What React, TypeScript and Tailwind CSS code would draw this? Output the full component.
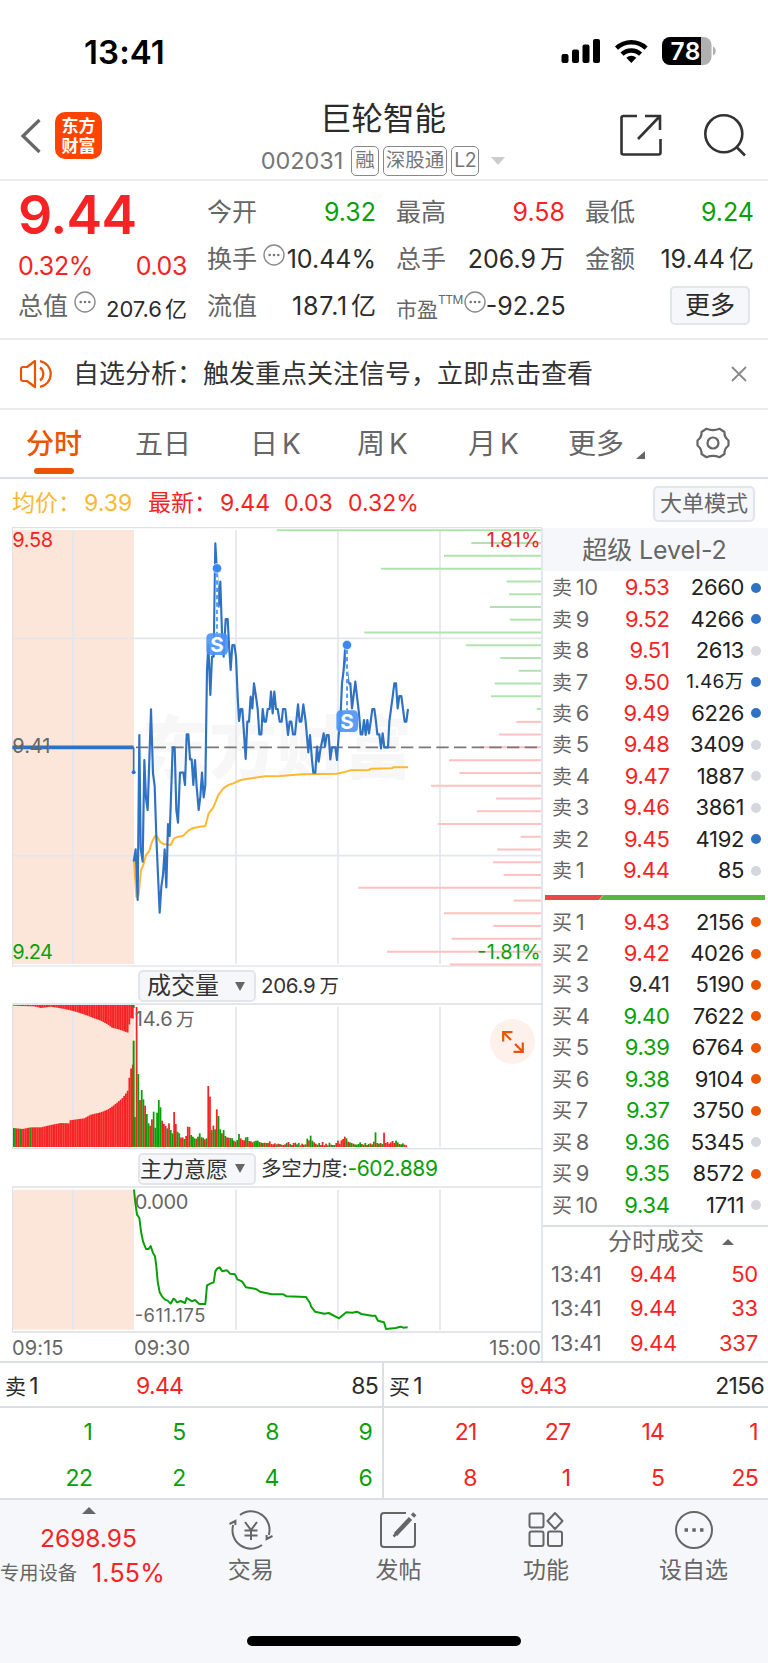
import type { ReactNode } from "react";
import clsx from "clsx";

type Level = { label: string; price: string; volume: string; dot: string };

const RED = "text-[#f52323]";
const GREEN = "text-[#08a008]";
const BLACK = "text-[#2b2b2b]";

const BLUE_DOT = "bg-[#2f72c4]";
const GRAY_DOT = "bg-[#d5d7de]";
const ORANGE_DOT = "bg-[#ea5504]";

const sells: Level[] = [
  { label: "10", price: "9.53", volume: "2660", dot: BLUE_DOT },
  { label: "9", price: "9.52", volume: "4266", dot: BLUE_DOT },
  { label: "8", price: "9.51", volume: "2613", dot: GRAY_DOT },
  { label: "7", price: "9.50", volume: "1.46万", dot: BLUE_DOT },
  { label: "6", price: "9.49", volume: "6226", dot: BLUE_DOT },
  { label: "5", price: "9.48", volume: "3409", dot: GRAY_DOT },
  { label: "4", price: "9.47", volume: "1887", dot: GRAY_DOT },
  { label: "3", price: "9.46", volume: "3861", dot: GRAY_DOT },
  { label: "2", price: "9.45", volume: "4192", dot: BLUE_DOT },
  { label: "1", price: "9.44", volume: "85", dot: GRAY_DOT },
];

const buys: Level[] = [
  { label: "1", price: "9.43", volume: "2156", dot: ORANGE_DOT },
  { label: "2", price: "9.42", volume: "4026", dot: ORANGE_DOT },
  { label: "3", price: "9.41", volume: "5190", dot: ORANGE_DOT },
  { label: "4", price: "9.40", volume: "7622", dot: ORANGE_DOT },
  { label: "5", price: "9.39", volume: "6764", dot: ORANGE_DOT },
  { label: "6", price: "9.38", volume: "9104", dot: ORANGE_DOT },
  { label: "7", price: "9.37", volume: "3750", dot: ORANGE_DOT },
  { label: "8", price: "9.36", volume: "5345", dot: GRAY_DOT },
  { label: "9", price: "9.35", volume: "8572", dot: ORANGE_DOT },
  { label: "10", price: "9.34", volume: "1711", dot: GRAY_DOT },
];

const trades = [
  { time: "13:41", price: "9.44", volume: "50" },
  { time: "13:41", price: "9.44", volume: "33" },
  { time: "13:41", price: "9.44", volume: "337" },
];

// All charts use three units per pixel
const PRICE_LINE =
  "401,1025 407,988 413,1140 418,645 422,985 428,1025 433,720 438,835 443,870 453,568 459,760 464,798 469,950 474,1065 479,1178 484,1100 489,1065 494,988 499,1102 504,912 509,948 518,682 524,682 529,870 534,908 540,758 550,758 555,795 560,643 565,643 570,718 575,718 580,795 585,720 590,800 596,870 601,830 606,758 611,832 616,795 621,450 625,375 631,525 636,410 641,410 646,70 651,160 656,260 661,185 666,340 671,410 677,297 683,297 687,375 692,450 697,375 703,375 708,410 713,530 717,603 722,567 727,567 732,640 737,717 742,605 747,605 752,530 757,565 762,490 768,530 773,567 778,643 784,643 788,567 793,605 798,605 803,567 809,567 813,515 818,580 823,515 828,567 833,567 839,605 845,605 849,567 856,567 864,645 869,605 874,605 879,643 885,643 894,553 899,605 904,605 910,553 917,605 925,697 930,645 936,720 940,758 946,758 951,680 956,725 961,690 971,640 975,680 980,645 986,645 991,718 996,682 1006,682 1011,720 1016,645 1021,603 1026,490 1031,450 1036,375 1041,450 1046,490 1051,490 1056,565 1066,485 1071,530 1077,580 1082,643 1087,643 1092,600 1097,645 1102,600 1107,640 1112,605 1117,567 1123,567 1128,605 1132,643 1138,643 1143,685 1148,640 1153,682 1164,682 1168,605 1178,530 1183,490 1188,490 1193,565 1198,528 1204,528 1209,567 1214,605 1219,605 1224,567";

const AVERAGE_LINE =
  "402,1025 409,1130 416,1125 423,1050 430,1035 438,1005 447,995 455,968 465,948 472,950 480,965 490,972 512,975 522,955 535,950 550,947 565,932 580,924 600,920 616,918 626,880 640,862 655,825 670,805 685,795 700,790 722,780 740,777 765,773 795,769 840,768 870,766 905,763 960,762 1010,761 1030,757 1050,751 1108,750 1112,746 1175,745 1180,742 1224,742";

const FORCE_LINE =
  "402,120 406,160 411,195 418,205 423,245 429,275 438,298 446,298 452,289 459,310 465,320 469,350 473,395 479,428 486,440 495,450 503,453 512,462 520,447 524,449 531,458 542,454 555,460 560,445 568,450 576,455 585,451 598,463 616,463 621,407 631,402 641,398 646,365 652,356 659,353 667,365 681,362 690,372 705,374 712,389 726,395 738,413 768,418 780,426 815,434 850,434 860,440 918,442 930,460 933,470 945,486 973,492 986,490 1017,506 1039,488 1057,489 1071,486 1084,493 1115,498 1126,498 1134,513 1152,518 1158,538 1187,535 1202,531 1210,534 1223,533";

// Left edge of each price level, from 9.58 down to 9.24
const LEVEL_STARTS = [
  830, 1414, 1332, 1143, 1520, 1527, 1470, 1530, 1093, 1398, 1501, 1556, 1484,
  1473, 1610, 1549, 1497, 1440, 1347, 1378, 1293, 1488, 1431, 1313, 1562, 1492,
  1479, 1511, 1075, 1541, 1332, 1480, 1355, 1161, 1350,
];

const VOLUMES =
  "g90 r420 g219 r141 g171 g143 r124 g99 g71 r64 r83 g106 g58 g103 g141 g119 r79 r69 r63 g56 r71 g51 g41 r105 r69 g46 g41 r28 r29 g24 r33 r61 r60 g36 g31 g26 r25 g31 g41 r29 g28 r23 g26 r183 r151 g51 r64 g53 r113 g93 g53 r41 g51 g33 r29 r28 g27 g26 r19 r16 g21 g39 r26 r21 r20 g29 g30 r18 r17 r14 g17 g19 g19 g15 r13 g12 r13 g12 r12 r17 r9 r8 r11 g8 r10 g9 r7 r6 r8 g12 r15 g9 r6 r12 r13 g8 g12 r5 r10 g7 r8 g25 r20 g34 g19 r14 r10 g7 g12 r6 r15 r5 r10 g5 g13 r7 g6 g6 r12 r19 r10 r20 r24 r31 g26 r16 g14 g12 r10 g8 g7 g9 g14 r9 g7 g12 r6 g9 r11 g8 r16 g44 r12 g10 r12 g9 r43 r12 r15 r10 r14 r18 r12 g19 g14 r9 g8 g11 r7 r5";

const PRE_BOTTOM: [number, number][] = [
  [37, 505], [65, 508], [90, 503], [120, 503], [150, 496], [180, 490], [204, 491],
  [206, 482], [250, 476], [270, 465], [300, 458], [320, 450], [335, 440],
  [350, 428], [365, 415], [380, 395], [384, 362], [390, 328], [398, 310],
];

const PRE_TOP: [number, number][] = [
  [37, 138], [60, 139], [100, 140], [120, 145], [150, 141], [180, 146], [205, 151],
  [220, 155], [240, 161], [260, 168], [280, 176], [300, 183], [320, 194],
  [335, 205], [350, 208], [365, 213], [381, 219], [385, 196], [391, 174], [398, 178],
];

function sample(table: [number, number][], x: number) {
  const i = table.findIndex(([px]) => px > x);
  if (i < 1) return table[i === 0 ? 0 : table.length - 1][1];
  const [x0, y0] = table[i - 1];
  const [x1, y1] = table[i];
  return y0 + ((y1 - y0) * (x - x0)) / (x1 - x0);
}

const preBars = Array.from({ length: 70 }, (_, i) => {
  const x = 37 + i * 5.2;
  return { x, top: sample(PRE_TOP, x), bottom: sample(PRE_BOTTOM, x) };
});

const volumeBars = VOLUMES.split(" ").map((v, i) => ({
  x: 402 + i * 5.12,
  height: Number(v.slice(1)),
  up: v[0] === "r",
}));

const stats: { label: ReactNode; value: string; unit?: string; color: string }[][] = [
  [
    { label: "今开", value: "9.32", color: GREEN },
    { label: "最高", value: "9.58", color: RED },
    { label: "最低", value: "9.24", color: GREEN },
  ],
  [
    { label: <>换手<Dots /></>, value: "10.44%", color: BLACK },
    { label: "总手", value: "206.9", unit: "万", color: BLACK },
    { label: "金额", value: "19.44", unit: "亿", color: BLACK },
  ],
];

function Dots() {
  return (
    <svg className="mb-3 ml-1.5 inline-block h-[22px] w-[22px] align-middle" viewBox="0 0 22 22">
      <circle cx="11" cy="11" r="10" fill="none" stroke="#8a8a8a" strokeWidth="1.4" />
      <g fill="#777">
        <circle cx="6.7" cy="11" r="1.3" />
        <circle cx="11" cy="11" r="1.3" />
        <circle cx="15.3" cy="11" r="1.3" />
      </g>
    </svg>
  );
}

function StatusBar() {
  return (
    <div className="flex h-[86px] items-start justify-between pl-[84px] pr-[52px] text-black">
      <span className="mt-[32px] text-[33px] font-semibold leading-[40px] tracking-[0.1px]">
        13:41
      </span>
      <svg className="mt-[34px]" width="157" height="34" viewBox="559 34 157 34">
        <rect x="561.5" y="54" width="7" height="9" rx="2" />
        <rect x="572" y="49.5" width="7" height="13.5" rx="2" />
        <rect x="582.5" y="44.5" width="7" height="18.5" rx="2" />
        <rect x="593" y="39" width="7" height="24" rx="2" />
        <g fill="none" stroke="#000" strokeWidth="4.4">
          <path d="M616.5 48.2a21.5 21.5 0 0 1 29.6 0" />
          <path d="M622 54.2a13.4 13.4 0 0 1 18.6 0" />
        </g>
        <path d="M631.3 63l-5-5.2a7.4 7.4 0 0 1 10 0z" />
        <path d="M701 37h2.5a8 8 0 0 1 8 8v12a8 8 0 0 1-8 8H701z" fill="#b0b0b0" />
        <path d="M701 37h-31a8 8 0 0 0-8 8v12a8 8 0 0 0 8 8h31z" />
        <path d="M713 46.5c3.6 1.5 3.6 7.5 0 9z" fill="#b0b0b0" />
        <text x="670.5" y="59.5" fill="#fff" fontSize="24.5" fontWeight="600" textLength="30">
          78
        </text>
      </svg>
    </div>
  );
}

function Header() {
  return (
    <header className="flex h-[95px] items-start justify-between border-b-2 border-[#ebebeb] pl-5 pr-[22px]">
      <div className="flex w-[200px] pt-[26px]">
        <svg className="mt-[6px]" width="22" height="36" viewBox="0 0 22 36">
          <path d="M19.5 2L3 18l16.5 16" fill="none" stroke="#666" strokeWidth="3.2" />
        </svg>
        <div className="ml-[13px] flex h-[47px] w-[47px] flex-col items-center justify-center rounded-[10px] bg-[#ff4400] text-[17px] font-bold leading-[20px] text-white">
          <span>东方</span>
          <span>财富</span>
        </div>
      </div>
      <div className="flex flex-col items-center">
        <h1 className="mt-[13px] text-[31.5px] leading-[40px] text-[#2b2b2b]">巨轮智能</h1>
        <div className="mt-[5px] flex items-center text-[#777]">
          <span className="text-[23.5px] leading-[34px] tracking-[-0.1px]">002031</span>
          <span className="ml-2 h-[30px] rounded-[5px] border-[1.5px] border-[#888] px-[3px] text-[19.5px] leading-[27px]">
            融
          </span>
          <span className="ml-1 h-[30px] rounded-[5px] border-[1.5px] border-[#888] px-[2px] text-[19.5px] leading-[27px]">
            深股通
          </span>
          <span className="ml-1 h-[30px] rounded-[5px] border-[1.5px] border-[#888] px-[2px] text-[19.5px] leading-[27px] tracking-tight">
            L2
          </span>
          <svg className="ml-3" width="14" height="8" viewBox="0 0 14 8">
            <path d="M0 0h14L7 8z" fill="#ccc" />
          </svg>
        </div>
      </div>
      <div className="flex w-[200px] justify-end gap-[41px] pt-[27px]">
        <svg width="43" height="44" viewBox="0 0 43 44" fill="none" stroke="#333" strokeWidth="2.6">
          <path d="M18 3H4.5q-2 0-2 2v34.5q0 2 2 2h35q2 0 2-2V26" />
          <path d="M26 3h15v14M41 3L19 26" />
        </svg>
        <svg width="43" height="44" viewBox="0 0 43 44" fill="none" stroke="#333" strokeWidth="2.6">
          <circle cx="20.8" cy="20.8" r="18.5" />
          <path d="M33 33.5l9 9" />
        </svg>
      </div>
    </header>
  );
}

function Quote() {
  return (
    <section className="flex h-[159px] gap-5 border-b-2 border-[#ebebeb] pl-[18px] pr-[14px]">
      <div className="w-[169px]">
        <div className={clsx("mt-[6px] h-[55px] text-[53.5px] font-semibold leading-[55px] tracking-[-0.6px]", RED)}>9.44</div>
        <div className={clsx("mt-[6px] flex justify-between text-[25px] leading-[36px] tracking-[-0.4px]", RED)}>
          <span>0.32%</span>
          <span>0.03</span>
        </div>
        <div className="mt-[1px] flex h-11 items-center justify-between text-[25px] text-[#666]">
          <span className="whitespace-nowrap">总值<Dots /></span>
          <span className="pt-1 text-[22px] text-[#2b2b2b]">
            207.6<span className="ml-[3px]">亿</span>
          </span>
        </div>
      </div>
      <div className="flex-1 pt-2">
        {stats.map((row, i) => (
          <div key={i} className="flex h-[47px] gap-5 leading-[47px]">
            {row.map((cell, j) => (
              <div key={j} className="flex w-[169px] justify-between whitespace-nowrap text-[25px] text-[#666]">
                <span>{cell.label}</span>
                <span className={cell.color}>
                  {cell.value}
                  {cell.unit && <span className="ml-1">{cell.unit}</span>}
                </span>
              </div>
            ))}
          </div>
        ))}
        <div className="flex h-[47px] gap-5 whitespace-nowrap text-[25px] leading-[47px] text-[#666]">
          <div className="flex w-[169px] justify-between">
            <span>流值</span>
            <span className="tracking-[0.8px] text-[#2b2b2b]">
              187.1<span className="ml-[3px] tracking-normal">亿</span>
            </span>
          </div>
          <div className="flex w-[169px] justify-between">
            <span className="flex text-[21px]">
              <span className="pt-[3px]">市盈</span>
              <span className="-mt-[7px] text-[12px] tracking-[-0.5px]">TTM</span>
              <span className="-ml-[5px]"><Dots /></span>
            </span>
            <span className="text-[#2b2b2b]">-92.25</span>
          </div>
          <div className="flex w-[169px] justify-end pr-1">
            <button className="mt-[3px] h-[39px] w-[80px] rounded-[5px] border-2 border-[#e3e5ec] bg-[#f6f7fa] text-[25px] leading-[35px] text-[#2b2b2b]">
              更多
            </button>
          </div>
        </div>
      </div>
    </section>
  );
}

function Notice() {
  return (
    <div className="flex h-[70px] items-center border-b-2 border-[#ebebeb] pl-5 pr-[21px]">
      <svg width="33" height="30" viewBox="0 0 33 30" fill="none" stroke="#ea5504" strokeWidth="2.2">
        <path d="M15 2L7 8H3q-2 0-2 2v10q0 2 2 2h4l8 6z" strokeLinejoin="round" />
        <path d="M20 8.5a8 8 0 0 1 0 13M20 2.2a13 13 0 0 1 0 25.6" />
      </svg>
      <span className="-mt-0.5 ml-[20px] flex-1 text-[26px] text-[#333]">
        自选分析：触发重点关注信号，立即点击查看
      </span>
      <svg width="16" height="16" viewBox="0 0 16 16" stroke="#888" strokeWidth="1.8">
        <path d="M1 1l14 14M15 1L1 15" />
      </svg>
    </div>
  );
}

function Tabs() {
  return (
    <nav className="flex h-[69px] items-start border-b-2 border-[#dcdee6] pl-[25px] pt-[10px] text-[28px] leading-[48px] text-[#666]">
      <div className="flex w-[58px] flex-col items-center font-medium text-[#ea5504]">
        <span>分时</span>
        <i className="h-[6px] w-10 rounded-[3px] bg-[#ea5504]" />
      </div>
      <span className="ml-[52px] w-[58px]">五日</span>
      <span className="ml-[57px] flex w-[50px] gap-[4px]">日<span>K</span></span>
      <span className="ml-[57px] flex w-[50px] gap-[4px]">周<span>K</span></span>
      <span className="ml-[61px] flex w-[50px] gap-[4px]">月<span>K</span></span>
      <span className="ml-[50px]">更多</span>
      <svg className="ml-[12px] mt-[31px]" width="9" height="8" viewBox="0 0 9 8">
        <path d="M9 0v8H0z" fill="#666" />
      </svg>
      <svg className="ml-[51px] mt-[7px]" width="34" height="32" viewBox="0 0 34 32" fill="none" stroke="#666" strokeWidth="2.2">
        <path d="M10.5 1.8Q17 4.500 23.5 1.8L28.5 5Q28 10 32.5 13.5V18.5Q28 22 28.5 27L23.5 30.2Q17 27.5 10.5 30.2L5.5 27Q6 22 1.5 18.5V13.5Q6 10 5.5 5Z" strokeLinejoin="round" />
        <circle cx="17" cy="16" r="5.5" />
      </svg>
    </nav>
  );
}

function PriceSummary() {
  return (
    <div className={clsx("flex h-[49px] items-center whitespace-nowrap pl-[12px] pr-[13px] text-[23px]", RED)}>
      <span className="w-[72px] text-[#fdb833]">均价：</span>
      <span className="w-[64px] text-[#fdb833]">9.39</span>
      <span className="w-[72px]">最新：</span>
      <span className="w-[64px]">9.44</span>
      <span className="w-[64px]">0.03</span>
      <span>0.32%</span>
      <button className="ml-auto h-[36px] w-[102px] rounded-[5px] border-2 border-[#e3e5ec] bg-[#f6f7fa] text-[22px] leading-[31px] text-[#666]">
        大单模式
      </button>
    </div>
  );
}

function SellMarker({ x, top, box }: { x: number; top: number; box: number }) {
  return (
    <g>
      <path d={`M${x} ${top}V${box}`} stroke="#fff" strokeWidth="7" />
      <path d={`M${x} ${top + 14}V${box}`} stroke="#5b9dfb" strokeWidth="6" strokeDasharray="13 9" />
      <circle cx={x} cy={top} r="14" fill="#3c87f2" stroke="#fff" strokeWidth="2" />
      <rect x={x - 32} y={box} width="65" height="65" rx="13" fill="#4a92f8" fillOpacity="0.9" />
      <text x={x} y={box + 55} textAnchor="middle" fontSize="62" fontWeight="700" fill="#fff">
        S
      </text>
    </g>
  );
}

function PriceChart() {
  return (
    <svg className="block" width="530" height="440" viewBox="36 21 1590 1320">
      <rect x="39" y="30" width="363" height="1302" fill="#fce6da" />
      <text x="424" y="760" fontSize="204" fontWeight="900" fill="#f7f7f8" textLength="812">
        东方财富
      </text>
      <g stroke="#e4e6ee" strokeWidth="5">
        <path d="M37 355H1626M37 1007H1626M219 30V1332M708 30V1332M1014 30V1332M1320 30V1332" />
      </g>
      <path d="M37 1338V23H1626" fill="none" stroke="#dfe1e8" strokeWidth="4" />
      <path d="M37 1338H1626" stroke="#e4e6ee" strokeWidth="4" />
      {LEVEL_STARTS.map((x, i) => (
        <path
          key={i}
          d={`M${x} ${31 + i * 38.3}H1625`}
          stroke={i < 15 ? "#b0e4ae" : "#ffc0c0"}
          strokeWidth="6"
        />
      ))}
      <path d="M408 682H1626" stroke="#777" strokeWidth="5" strokeDasharray="37 16" />
      <polyline points={AVERAGE_LINE} fill="none" stroke="#fdb833" strokeWidth="6" strokeLinejoin="round" />
      <polyline points={PRICE_LINE} fill="none" stroke="#2f72c4" strokeWidth="6.5" strokeLinejoin="round" />
      <path d="M37 682H401" stroke="#2f72c4" strokeWidth="11" />
      <path d="M401 682V757" stroke="#2f72c4" strokeWidth="5" />
      <circle cx="401" cy="757" r="6" fill="#2f72c4" />
      <SellMarker x={651} top={145} box={340} />
      <SellMarker x={1041} top={375} box={571} />
      <g fontSize="60">
        <text x="37" y="81" fill="#f52323" textLength="122">9.58</text>
        <text x="37" y="699" fill="#666" textLength="114">9.41</text>
        <text x="37" y="1317" fill="#08a008" textLength="122">9.24</text>
        <text x="1460" y="81" fill="#f52323" textLength="162">1.81%</text>
        <text x="1432" y="1317" fill="#08a008" textLength="190">-1.81%</text>
      </g>
    </svg>
  );
}

function VolumeChart() {
  return (
    <div className="relative">
      <svg className="block" width="530" height="147" viewBox="36 130 1590 441">
        <rect x="39" y="136" width="363" height="426" fill="#fce6da" />
        <path d="M219 141V562M708 141V562M1014 141V562M1320 141V562" stroke="#e4e6ee" strokeWidth="5" />
        {preBars.map((b, i) => (
          <g key={i} fill={[0, 1, 4, 10].includes(i) ? "#08a008" : "#f52323"}>
            <rect x={b.x} y="136" width="5.4" height={b.top - 136} />
            <rect x={b.x} y={b.bottom} width="5.4" height={562 - b.bottom} />
          </g>
        ))}
        <rect x="398" y="243" width="6" height="319" fill="#08a008" />
        <rect x="398" y="136" width="6" height="9" fill="#08a008" />
        {volumeBars.map((b, i) => (
          <rect
            key={i}
            x={b.x}
            y={562 - b.height}
            width="5.3"
            height={b.height}
            fill={b.up ? "#f52323" : "#08a008"}
          />
        ))}
        <path d="M37 133H1626" stroke="#dcdee6" strokeWidth="5" />
        <path d="M37 133V567H1626" fill="none" stroke="#dcdee6" strokeWidth="4" />
        <g fill="#666" fontSize="60">
          <text x="404" y="199" textLength="114">14.6</text>
          <text x="528" y="199" fontSize="56">万</text>
        </g>
      </svg>
      <button className="absolute right-[6px] top-[16px] flex h-[45px] w-[45px] items-center justify-center rounded-full bg-[#fef1eb]">
        <svg width="24" height="24" viewBox="0 0 24 24" fill="none" stroke="#ea5504" strokeWidth="2.2">
          <path d="M2.2 11.5V2.2H11.5M2.2 2.2L10 10M21.8 12.5v9.3H12.5M21.8 21.8L14 14" />
        </svg>
      </button>
    </div>
  );
}

function ForceChart() {
  return (
    <svg className="block" width="530" height="147" viewBox="36 109 1590 441">
      <rect x="39" y="120" width="363" height="420" fill="#fce6da" />
      <path d="M219 120V540M708 120V540M1014 120V540M1320 120V540" stroke="#e4e6ee" strokeWidth="5" />
      <path d="M37 547V112H1626" fill="none" stroke="#dfe1e8" strokeWidth="4" />
      <path d="M37 547H1626" stroke="#dcdee6" strokeWidth="5" />
      <g fill="#666" fontSize="60">
        <text x="404" y="178" textLength="161">0.000</text>
        <text x="404" y="516" fontSize="55" textLength="212">-611.175</text>
      </g>
      <polyline points={FORCE_LINE} fill="none" stroke="#08a008" strokeWidth="6" strokeLinejoin="round" />
    </svg>
  );
}

function IndicatorBar({ name, children }: { name: string; children: ReactNode }) {
  return (
    <div className="flex items-center whitespace-nowrap pl-[126px]">
      <button
        className={clsx(
          "flex h-8 w-[118px] items-center justify-between rounded-[5px] border-2 border-[#e3e5ec] bg-[#f6f7fa] pr-[9px] leading-[28px] text-[#333]",
          name.length > 3 ? "text-[22px]" : "pl-[7px] text-[24px]",
        )}
      >
        {name}
        <svg width="10" height="9" viewBox="0 0 10 9">
          <path d="M0 0h10L5 9z" fill="#666" />
        </svg>
      </button>
      <span className="ml-[5px] text-[20.5px] tracking-[-0.3px] text-[#333]">{children}</span>
    </div>
  );
}

function LevelRow({ side, level }: { side: string; level: Level }) {
  const diff = Number(level.price) - 9.41;
  const color = diff > 0.001 ? RED : diff < -0.001 ? GREEN : BLACK;
  return (
    <div className="flex h-[31.45px] items-center whitespace-nowrap pl-[9px] pr-[7px] text-[22px] tracking-[-0.35px]">
      <span className="w-[58px] text-[#666]">
        <span className="mr-[4px] text-[20px]">{side}</span>
        {level.label}
      </span>
      <span className={clsx("w-[59.5px] text-right", color)}>{level.price}</span>
      <span className={clsx("flex-1 text-right text-[#222]", level.volume.includes("万") && "text-[19px] tracking-[0.3px]")}>
        {level.volume}
      </span>
      <i className={clsx("ml-[7px] h-[10px] w-[10px] rounded-full", level.dot)} />
    </div>
  );
}

function OrderBook() {
  return (
    <aside className="flex w-[227px] flex-col border-l-2 border-[#e4e6ee]">
      <h2 className="h-[43px] shrink-0 bg-[#f6f7fa] pr-[2px] text-center text-[25px] leading-[44px] tracking-[-0.1px] text-[#666]">
        超级 Level-2
      </h2>
      <div className="pt-[1px]">
        {sells.map((level) => (
          <LevelRow key={level.label} side="卖" level={level} />
        ))}
      </div>
      <svg className="ml-[2px] mt-[9px] shrink-0" width="220" height="5" viewBox="0 0 220 5">
        <path d="M0 0h58l-4 5H0z" fill="#e8484a" />
        <path d="M58.5 0H220v5H54.5z" fill="#56b83e" />
      </svg>
      <div className="pt-[6px]">
        {buys.map((level) => (
          <LevelRow key={level.label} side="买" level={level} />
        ))}
      </div>
      <div className="mt-[4px] border-t-2 border-[#dcdee6]">
        <div className="flex h-[30px] items-center justify-center gap-[18px] pl-[31px] text-[24px] text-[#666]">
          分时成交
          <svg width="12" height="6" viewBox="0 0 12 6">
            <path d="M0 6h12L6 0z" fill="#666" />
          </svg>
        </div>
        {trades.map((t) => (
          <div key={t.volume} className="flex h-[34.8px] items-center pl-[8px] pr-[10px] text-[22px] tracking-[-0.2px]">
            <span className="w-[55px] text-[#666]">{t.time}</span>
            <span className={clsx("w-[71px] text-right", RED)}>{t.price}</span>
            <span className={clsx("flex-1 text-right", RED)}>{t.volume}</span>
          </div>
        ))}
      </div>
    </aside>
  );
}

function QueueHalf({ side, price, volume, rows, color }: { side: string; price: string; volume: string; rows: string[][]; color: string }) {
  return (
    <div className="flex-1 text-[23px] tracking-[-0.7px]">
      <div className="flex h-[45px] items-center border-b-2 border-[#dcdee6] pl-[5px] pr-[4px] pt-1 text-[#2b2b2b]">
        <span className="w-[131px]"><span className="mr-1 text-[21px]">{side}</span>1</span>
        <span className={RED}>{price}</span>
        <span className="ml-auto">{volume}</span>
      </div>
      {rows.map((row, i) => (
        <div key={i} className={clsx("grid h-[46px] grid-cols-4 items-center pr-[9px] pt-[2px]", color)}>
          {row.map((n, j) => (
            <span key={j} className="pr-px text-right">{n}</span>
          ))}
        </div>
      ))}
    </div>
  );
}

function OrderQueue() {
  return (
    <section className="flex h-[139px] border-y-2 border-[#dcdee6]">
      <div className="flex w-[384px] border-r-2 border-[#dcdee6]">
        <QueueHalf side="卖" price="9.44" volume="85" color={GREEN} rows={[["1", "5", "8", "9"], ["22", "2", "4", "6"]]} />
      </div>
      <QueueHalf side="买" price="9.43" volume="2156" color={RED} rows={[["21", "27", "14", "1"], ["8", "1", "5", "25"]]} />
    </section>
  );
}

const actions: { label: string; icon: ReactNode }[] = [
  {
    label: "交易",
    icon: (
      <>
        <path d="M11 5A18.5 18.5 0 0 1 39.8 25M33 35A18.5 18.5 0 0 1 4.2 15M.5 14l5.9-3v4M43.5 26l-5.9 3v-4" />
        <path d="M16 12l6 8 6-8M15.5 20.5h13M15.5 25.5h13M22 19.5V30" />
      </>
    ),
  },
  {
    label: "发帖",
    icon: (
      <>
        <path d="M30 3H8q-3 0-3 3v28q0 3 3 3h28q3 0 3-3V13" />
        <path d="M34.5 8.5L19.5 24.5" strokeWidth="4.5" />
        <path d="M36.500 6.300l2.300-2.500" strokeWidth="4.5" />
        <path d="M17.5 26.5l3.500-3.500" strokeWidth="2.5" />
      </>
    ),
  },
  {
    label: "功能",
    icon: (
      <>
        <rect x="5.5" y="3.5" width="14" height="14" rx="2" />
        <rect x="5.5" y="21.5" width="14" height="14.5" rx="2" />
        <rect x="24" y="21.5" width="14" height="14.5" rx="2" />
        <path d="M31 3l7.500 8L31 19l-7.500-8z" strokeLinejoin="round" />
      </>
    ),
  },
  {
    label: "设自选",
    icon: (
      <>
        <circle cx="22" cy="20" r="18" />
        <path d="M12.5 20H16M20.3 20h3.500M28 20h3.500" strokeWidth="3.5" />
      </>
    ),
  },
];

function BottomBar() {
  return (
    <footer className="h-[163px] bg-[#f6f7fa]">
      <div className="flex">
        <div className={clsx("flex h-[98px] w-[177px] flex-col items-center whitespace-nowrap pt-[7px]", RED)}>
          <svg width="14" height="7" viewBox="0 0 14 7">
            <path d="M0 7h14L7 0z" fill="#666" />
          </svg>
          <span className="mt-[7px] text-[24.5px] leading-[34px]">2698.95</span>
          <span className="flex w-full items-center text-[25px] leading-[36px] tracking-[0.2px]">
            <span className="w-[92px] text-[19.3px] tracking-normal text-[#666]">专用设备</span>
            1.55%
          </span>
        </div>
        {actions.map((a) => (
          <div key={a.label} className="flex w-[147.6px] flex-col items-center pt-[10px] text-[#666]">
            <svg width="44" height="40" viewBox="0 0 44 40" fill="none" stroke="#666" strokeWidth="2">
              {a.icon}
            </svg>
            <span className="mt-[3px] text-[23px] leading-[34px]">{a.label}</span>
          </div>
        ))}
      </div>
      <div className="mx-auto mt-[38px] h-[10px] w-[274px] rounded-full bg-black" />
    </footer>
  );
}

export default function App() {
  return (
    <div className="h-[1663px] w-[768px] overflow-hidden bg-white font-[Inter,'Noto_Sans_CJK_SC',sans-serif]">
      <StatusBar />
      <Header />
      <Quote />
      <Notice />
      <Tabs />
      <PriceSummary />
      <div className="flex h-[833px]">
        <div className="-mt-px w-[541px] pl-[12px]">
          <div className="h-[439px]"><PriceChart /></div>
          <div className="flex h-[37px] items-center pt-[3px]">
            <IndicatorBar name="成交量">
              206.9<span className="ml-[4px] text-[19.5px]">万</span>
            </IndicatorBar>
          </div>
          <div className="h-[146px]"><VolumeChart /></div>
          <div className="flex h-[37px] items-center pt-[2px]">
            <IndicatorBar name="主力意愿">
              多空力度:<span className={clsx("text-[21px] tracking-[-0.4px]", GREEN)}>-602.889</span>
            </IndicatorBar>
          </div>
          <div className="h-[146px]"><ForceChart /></div>
          <div className="flex pt-[3px] text-[20px] leading-[26px] tracking-[0.1px] text-[#666]">
            <span className="w-[122px]">09:15</span>
            <span>09:30</span>
            <span className="ml-auto">15:00</span>
          </div>
        </div>
        <OrderBook />
      </div>
      <OrderQueue />
      <BottomBar />
    </div>
  );
}
